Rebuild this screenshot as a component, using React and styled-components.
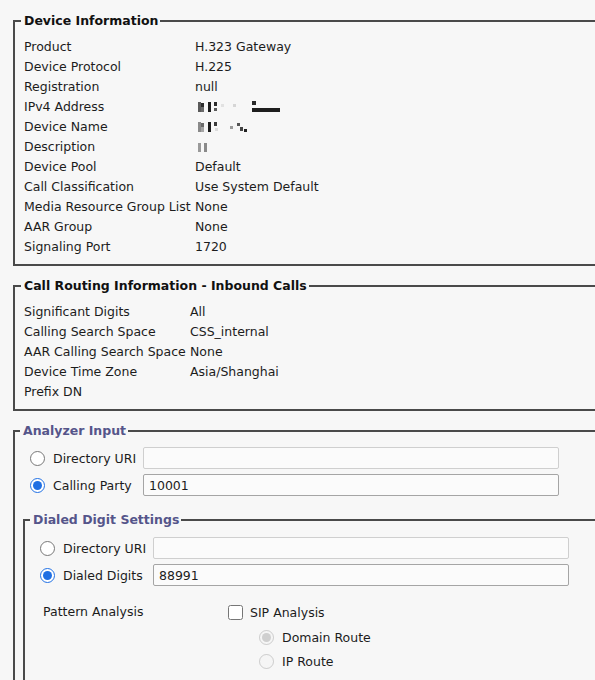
import styled, { createGlobalStyle } from "styled-components";

const GlobalStyle = createGlobalStyle`
  html, body {
    margin: 0;
    background: #f7f7f7;
    overflow: hidden;
  }
  body {
    font-family: "DejaVu Sans", Verdana, sans-serif;
    font-size: 12.5px;
    color: #1c1c1c;
  }
`;

const Page = styled.div`
  padding: 13px 0 0 13px;
  width: 660px;
`;

const Fieldset = styled.fieldset`
  margin: 0 0 12px;
  padding: ${(p) => (p.$form ? "8px 0 20px 8px" : "8px 0 7px 9px")};
  border: 2px solid #4a4a4a;
  border-right: none;
  min-width: 0;
`;

const Legend = styled.legend`
  margin-left: -3px;
  padding: 0 2px 0 3px;
  font-weight: bold;
  line-height: 16px;
  color: ${(p) => p.$tint || "#111"};
`;

const InfoTable = styled.div`
  display: grid;
  grid-template-columns: ${(p) => p.$labelWidth}px 1fr;
  grid-auto-rows: 20px;
  align-items: center;
  white-space: nowrap;
`;

const Cell = styled.span`
  line-height: 20px;
`;

const ChoiceList = styled.div`
  display: flex;
  flex-direction: column;
  gap: 5px;
  margin-left: 7px;
`;

const ChoiceRow = styled.label`
  display: flex;
  align-items: center;
  height: 22px;
`;

const Radio = styled.input.attrs({ type: "radio" })`
  width: 15px;
  height: 15px;
  margin: 0 8px 0 0;
  accent-color: #1f6fe3;
  flex: none;
`;

const ChoiceLabel = styled.span`
  width: 90px;
  flex: none;
  white-space: nowrap;
`;

const TextBox = styled.input.attrs({ type: "text" })`
  box-sizing: border-box;
  width: 416px;
  height: 22px;
  margin: 0;
  padding: 0 5px;
  border: 1px solid ${(p) => (p.$strong ? "#a5a5a5" : "#cfcfcf")};
  border-radius: 2px;
  background: #fbfbfb;
  font: inherit;
  color: #1c1c1c;
  outline: none;
`;

const Nested = styled(Fieldset)`
  margin: 16px 0 0 0;
  padding-top: 9px;
`;

const AnalysisBlock = styled.div`
  display: grid;
  grid-template-columns: 185px auto;
  margin: 13px 0 0 10px;
`;

const AnalysisLabel = styled.span`
  line-height: 26px;
`;

const Options = styled.div`
  display: flex;
  flex-direction: column;
`;

const CheckRow = styled.label`
  display: flex;
  align-items: center;
  height: 26px;
`;

const Checkbox = styled.input.attrs({ type: "checkbox" })`
  width: 15px;
  height: 15px;
  margin: 0 7px 0 0;
`;

const SubOption = styled.label`
  display: flex;
  align-items: center;
  height: 24px;
  margin-left: 31px;
  color: #1c1c1c;

  &:first-of-type {
    margin-top: 2px;
  }
`;

const SubRadio = styled(Radio)`
  margin-right: 8px;
`;

// pixelated, redacted values
const Mosaic = ({ blocks }) => (
  <svg width="95" height="14" viewBox="-3 0 95 14" style={{ display: "block" }}>
    {blocks.map(([x, y, w, h, c], i) => (
      <rect key={i} x={x} y={y} width={w} height={h} fill={c} />
    ))}
  </svg>
);

const ipBlocks = [
  [0, 2, 3, 10, "#5a5a5a"],
  [3, 3, 3, 4, "#2a2a2a"],
  [3, 7, 3, 5, "#6a6a6a"],
  [10, 2, 3, 10, "#1e1e1e"],
  [16, 2, 3, 4, "#2a2a2a"],
  [16, 8, 3, 3, "#5a5a5a"],
  [23, 4, 3, 3, "#e2e2e2"],
  [35, 4, 3, 3, "#d6d6d6"],
  [54, 1, 4, 4, "#2a2a2a"],
  [54, 8, 28, 4, "#1e1e1e"],
];

const nameBlocks = [
  [0, 2, 3, 10, "#8a8a8a"],
  [3, 3, 3, 4, "#6a6a6a"],
  [3, 7, 3, 5, "#a5a5a5"],
  [10, 2, 3, 10, "#1e1e1e"],
  [16, 2, 3, 4, "#3a3a3a"],
  [17, 8, 3, 3, "#dcdcdc"],
  [32, 6, 3, 3, "#9a9a9a"],
  [39, 3, 3, 3, "#555"],
  [42, 7, 3, 4, "#444"],
  [46, 9, 3, 3, "#222"],
];

const descBlocks = [
  [0, 3, 3, 9, "#9a9a9a"],
  [6, 3, 3, 9, "#8a8a8a"],
];

const deviceInfo = [
  ["Product", "H.323 Gateway"],
  ["Device Protocol", "H.225"],
  ["Registration", "null"],
  ["IPv4 Address", <Mosaic blocks={ipBlocks} />],
  ["Device Name", <Mosaic blocks={nameBlocks} />],
  ["Description", <Mosaic blocks={descBlocks} />],
  ["Device Pool", "Default"],
  ["Call Classification", "Use System Default"],
  ["Media Resource Group List", "None"],
  ["AAR Group", "None"],
  ["Signaling Port", "1720"],
];

const inbound = [
  ["Significant Digits", "All"],
  ["Calling Search Space", "CSS_internal"],
  ["AAR Calling Search Space", "None"],
  ["Device Time Zone", "Asia/Shanghai"],
  ["Prefix DN", ""],
];

const InfoSection = ({ title, rows, labelWidth }) => (
  <Fieldset>
    <Legend>{title}</Legend>
    <InfoTable $labelWidth={labelWidth}>
      {rows.map(([k, v]) => [
        <Cell key={k}>{k}</Cell>,
        <Cell key={k + "-v"}>{v}</Cell>,
      ])}
    </InfoTable>
  </Fieldset>
);

const TINT = "#55558a";

export default function App() {
  return (
    <Page>
      <GlobalStyle />
      <InfoSection title="Device Information" rows={deviceInfo} labelWidth={171} />
      <InfoSection title="Call Routing Information - Inbound Calls" rows={inbound} labelWidth={166} />

      <Fieldset $form>
        <Legend $tint={TINT}>Analyzer Input</Legend>
        <ChoiceList>
          <ChoiceRow>
            <Radio name="caller" />
            <ChoiceLabel>Directory URI</ChoiceLabel>
            <TextBox defaultValue="" />
          </ChoiceRow>
          <ChoiceRow>
            <Radio name="caller" defaultChecked />
            <ChoiceLabel>Calling Party</ChoiceLabel>
            <TextBox $strong defaultValue="10001" />
          </ChoiceRow>
        </ChoiceList>

        <Nested $form>
          <Legend $tint={TINT}>Dialed Digit Settings</Legend>
          <ChoiceList>
            <ChoiceRow>
              <Radio name="dialed" />
              <ChoiceLabel>Directory URI</ChoiceLabel>
              <TextBox defaultValue="" />
            </ChoiceRow>
            <ChoiceRow>
              <Radio name="dialed" defaultChecked />
              <ChoiceLabel>Dialed Digits</ChoiceLabel>
              <TextBox $strong defaultValue="88991" />
            </ChoiceRow>
          </ChoiceList>

          <AnalysisBlock>
            <AnalysisLabel>Pattern Analysis</AnalysisLabel>
            <Options>
              <CheckRow>
                <Checkbox />
                SIP Analysis
              </CheckRow>
              <SubOption>
                <SubRadio name="route" disabled defaultChecked />
                Domain Route
              </SubOption>
              <SubOption>
                <SubRadio name="route" disabled />
                IP Route
              </SubOption>
            </Options>
          </AnalysisBlock>
        </Nested>
      </Fieldset>
    </Page>
  );
}
